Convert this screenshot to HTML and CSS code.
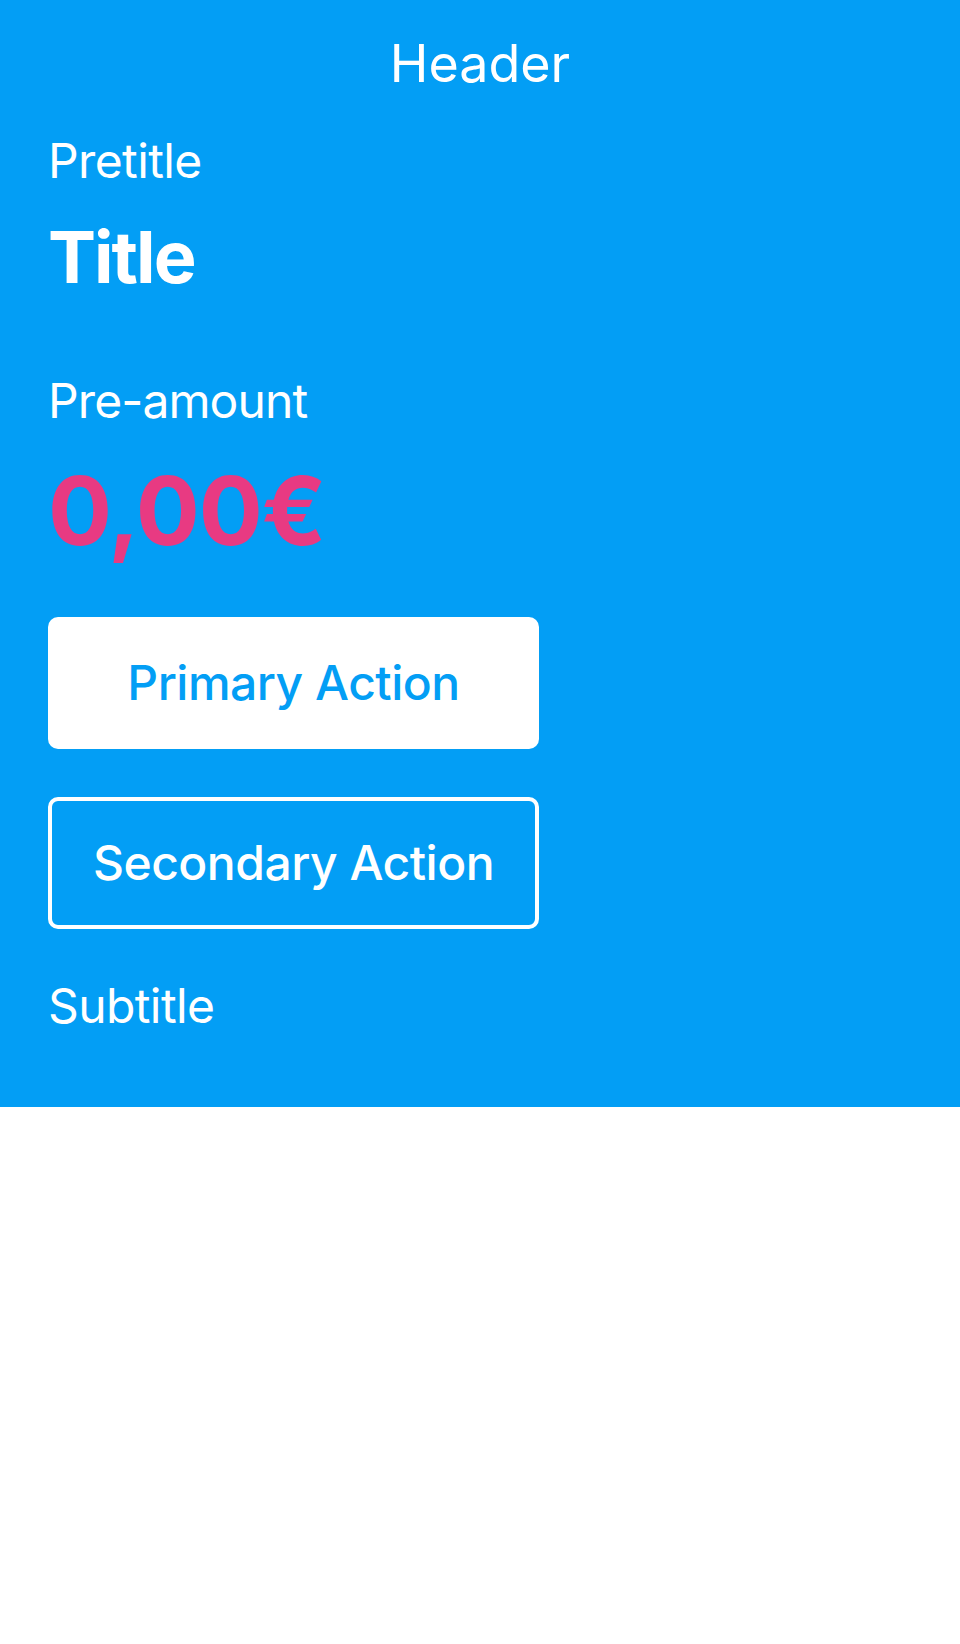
FILE: index.html
```html
<!DOCTYPE html>
<html>
<head>
<meta charset="utf-8">
<link rel="stylesheet" href="styles.css">
</head>
<body>
<div class="screen">
  <header class="nav">
    <h1 class="nav-title">Header</h1>
  </header>
  <main class="content">
    <p class="pretitle">Pretitle</p>
    <h2 class="title">Title</h2>
    <p class="preamount">Pre-amount</p>
    <p class="amount">0,00€</p>
    <div class="actions">
      <button class="btn btn-primary">Primary Action</button>
      <button class="btn btn-secondary">Secondary Action</button>
    </div>
    <p class="subtitle">Subtitle</p>
  </main>
</div>
</body>
</html>
```
FILE: styles.css
```css
html, body {
  margin: 0;
  padding: 0;
  background: #ffffff;
}
body {
  font-family: Inter, "Noto Sans", "Liberation Sans", sans-serif;
  color: #ffffff;
}
.screen {
  background: #039ef5;
}
.nav {
  padding-top: 34px;
  height: 60px;
  display: flex;
  justify-content: center;
}
.nav-title {
  margin: 0;
  font-size: 52px;
  line-height: 60px;
  font-weight: 400;
  letter-spacing: 0;
}
.content {
  padding: 37.5px 48px 72.5px;
  display: flex;
  flex-direction: column;
  align-items: flex-start;
}
.pretitle, .preamount, .subtitle {
  margin: 0;
  font-size: 48px;
  line-height: 58px;
  font-weight: 400;
  letter-spacing: -0.6px;
}
.preamount {
  letter-spacing: -0.9px;
}
.title {
  margin: 24.5px 0 0;
  font-size: 72px;
  line-height: 86px;
  font-weight: 700;
  letter-spacing: -2px;
}
.preamount {
  margin-top: 71.5px;
}
.amount {
  margin: 24px 0 0;
  font-size: 95px;
  line-height: 114px;
  font-weight: 700;
  letter-spacing: -1.2px;
  color: #e83a82;
}
.actions {
  margin-top: 49.5px;
  display: flex;
  flex-direction: column;
  gap: 48px;
}
.btn {
  width: 491px;
  height: 132px;
  border-radius: 10px;
  font-family: inherit;
  font-size: 48px;
  line-height: 58px;
  font-weight: 500;
  letter-spacing: -0.5px;
  display: flex;
  align-items: center;
  justify-content: center;
  padding: 0;
  box-sizing: border-box;
}
.btn-primary {
  background: #ffffff;
  color: #039ef5;
  border: none;
}
.btn-secondary {
  background: transparent;
  color: #ffffff;
  border: 4.5px solid #ffffff;
}
.subtitle {
  margin-top: 47.5px;
}
```
